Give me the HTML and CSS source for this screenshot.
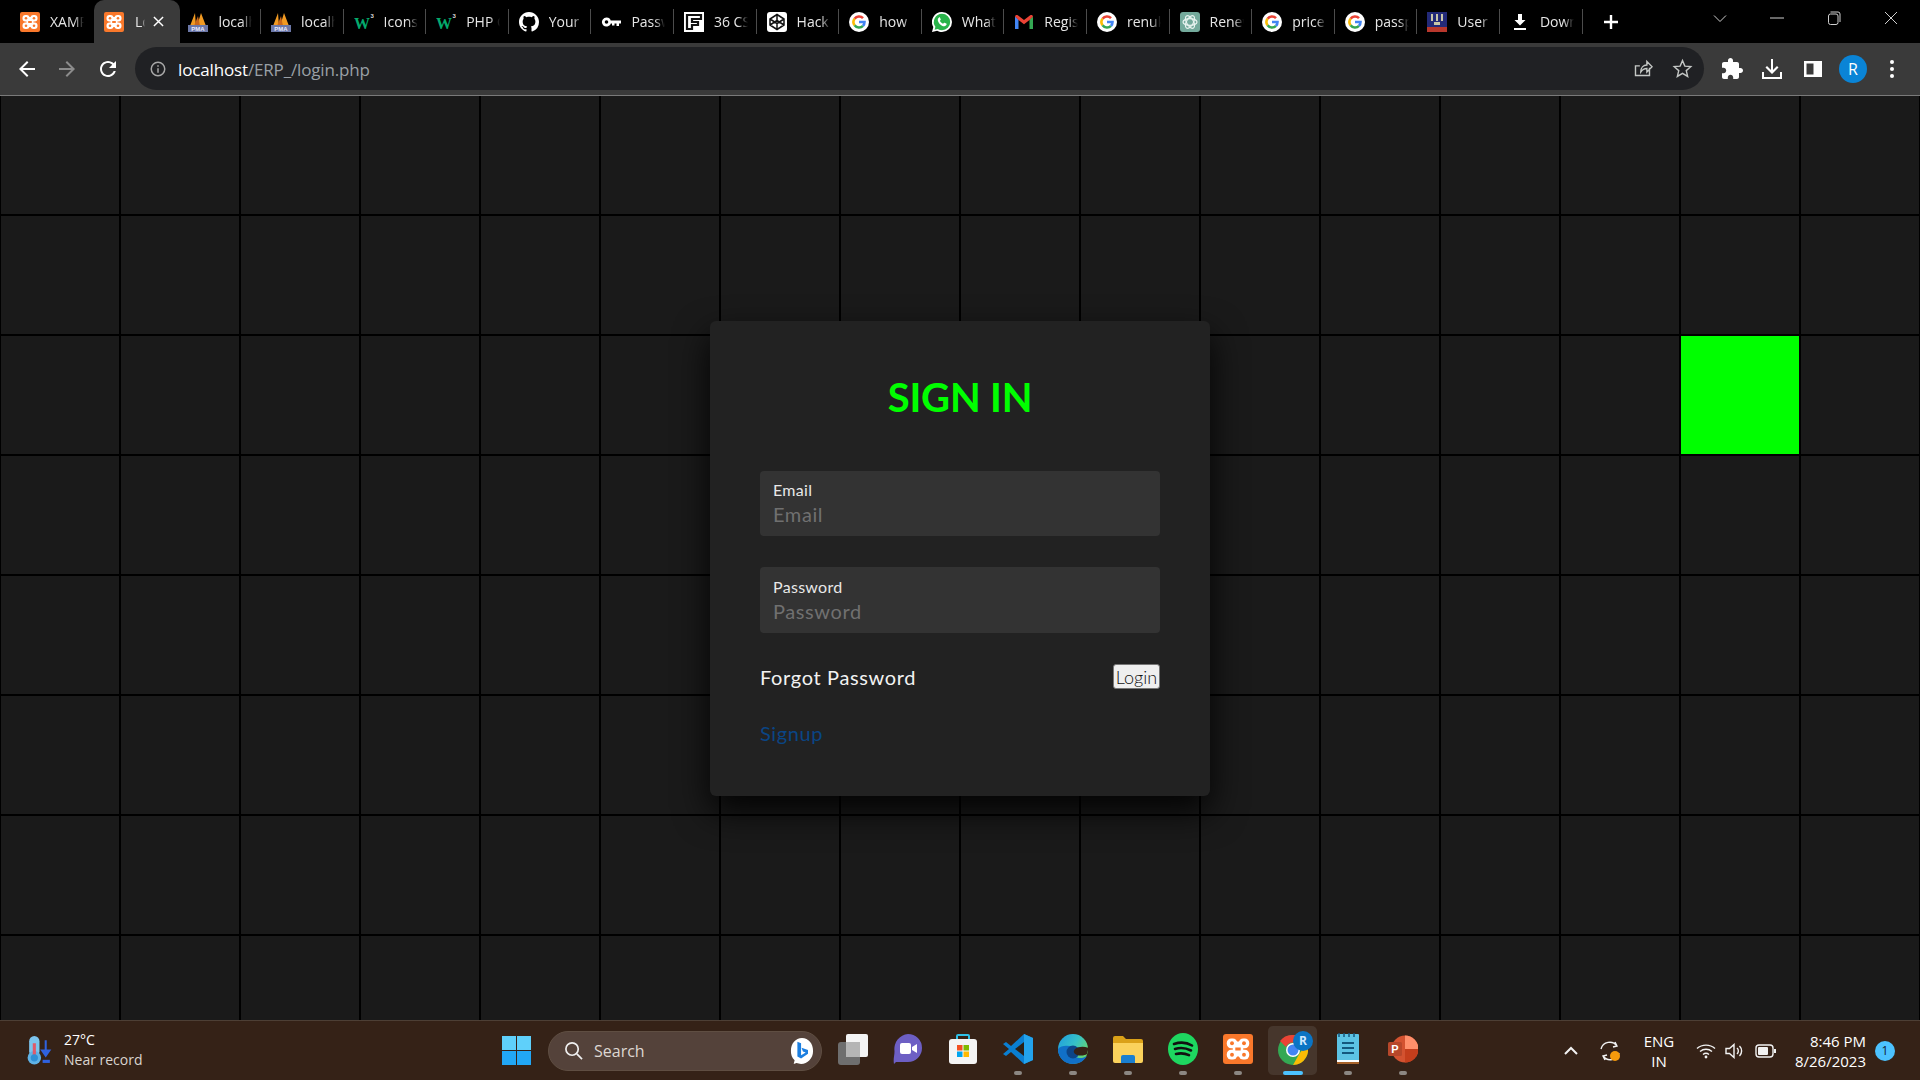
FILE: index.html
```html
<!DOCTYPE html>
<html>
<head>
<title>Login</title>
<link rel="stylesheet" href="styles.css">
</head>
<body>
<!-- favicons that show up more than once -->
<svg class="defs" width="0" height="0">
  <symbol id="xampp" viewBox="0 0 20 20">
    <rect width="20" height="20" rx="2" fill="#f9782b"/>
    <g fill="#fff">
      <rect x="2.500" y="3" width="7" height="6.500" rx="3"/>
      <rect x="10.500" y="3" width="7" height="6.500" rx="3"/>
      <rect x="2.500" y="10.500" width="7" height="6.500" rx="3"/>
      <rect x="10.500" y="10.500" width="7" height="6.500" rx="3"/>
      <rect x="6.500" y="5" width="7" height="10"/>
    </g>
    <g fill="#f9782b">
      <circle cx="6" cy="6.200" r="1.300"/>
      <circle cx="14" cy="6.200" r="1.300"/>
      <circle cx="6" cy="13.800" r="1.300"/>
      <circle cx="14" cy="13.800" r="1.300"/>
      <rect x="8.200" y="9" width="3.600" height="2"/>
    </g>
  </symbol>
  <symbol id="google" viewBox="0 0 20 20">
    <circle cx="10" cy="10" r="10" fill="#fff"/>
    <g fill="none" stroke-width="2.600">
      <path d="M5.600 6.700A5.500 5.500 0 0 1 14 6.200" stroke="#ea4335"/>
      <path d="M5.600 13.300A5.500 5.500 0 0 1 5.600 6.700" stroke="#fbbc05"/>
      <path d="M14 13.800A5.500 5.500 0 0 1 5.600 13.300" stroke="#34a853"/>
      <path d="M14 13.800A5.500 5.500 0 0 0 15.500 10H10" stroke="#4285f4"/>
    </g>
  </symbol>
  <symbol id="sails" viewBox="0 0 20 14">
    <path d="M2 14 7 1l1 13zM9 14 13 1l5 13z" fill="#f19a22"/>
    <path d="M6 14 10 4l2 10z" fill="#c9661a"/>
  </symbol>
</svg>

<header class="tabstrip">
  <div class="tab tab-first"><svg class="favicon"><use href="#xampp"/></svg><span class="tab-title">XAMPP</span></div>
  <div class="tab tab-active"><svg class="favicon"><use href="#xampp"/></svg><span class="tab-title">Login</span>
    <svg class="tab-close" viewBox="0 0 12 12"><path d="M1 1l10 10M11 1 1 11"/></svg></div>
  <div class="tab"><svg class="favicon" viewBox="0 0 20 20"><use href="#sails" width="20" height="14"/><rect y="13" width="20" height="7" fill="#6c78a8"/><text x="10" y="19" class="pma-text">PMA</text></svg><span class="tab-title">localhost</span></div>
  <div class="tab"><svg class="favicon" viewBox="0 0 20 20"><use href="#sails" width="20" height="14"/><rect y="13" width="20" height="7" fill="#6c78a8"/><text x="10" y="19" class="pma-text">PMA</text></svg><span class="tab-title">localhost</span></div>
  <div class="tab"><svg class="favicon" viewBox="0 0 20 20"><text x="0" y="17" class="w3-w">W</text><text x="16.500" y="6" class="w3-3">3</text></svg><span class="tab-title">Icons</span></div>
  <div class="tab"><svg class="favicon" viewBox="0 0 20 20"><text x="0" y="17" class="w3-w">W</text><text x="16.500" y="6" class="w3-3">3</text></svg><span class="tab-title">PHP Conn</span></div>
  <div class="tab"><svg class="favicon" viewBox="0 0 16 16"><path fill="#fff" d="M8 0C3.58 0 0 3.58 0 8c0 3.54 2.29 6.53 5.47 7.59.4.07.55-.17.55-.38 0-.19-.01-.82-.01-1.49-2.01.37-2.53-.49-2.69-.94-.09-.23-.48-.94-.82-1.13-.28-.15-.68-.52-.01-.53.63-.01 1.08.58 1.23.82.72 1.21 1.87.87 2.33.66.07-.52.28-.87.51-1.07-1.78-.2-3.64-.89-3.64-3.95 0-.87.31-1.59.82-2.15-.08-.2-.36-1.02.08-2.12 0 0 .67-.21 2.2.82.64-.18 1.32-.27 2-.27.68 0 1.36.09 2 .27 1.53-1.04 2.2-.82 2.2-.82.44 1.1.16 1.92.08 2.12.51.56.82 1.27.82 2.15 0 3.07-1.87 3.75-3.65 3.95.29.25.54.73.54 1.48 0 1.07-.01 1.93-.01 2.2 0 .21.15.46.55.38A8.013 8.013 0 0016 8c0-4.42-3.58-8-8-8z"/></svg><span class="tab-title">Your</span></div>
  <div class="tab"><svg class="favicon" viewBox="0 0 20 20"><path fill="#fff" d="M5.500 5.500a4.500 4.500 0 1 1-4.300 6 4.500 4.500 0 0 1 4.300-6zm0 2.700a1.800 1.800 0 1 0 0 3.600 1.800 1.800 0 0 0 0-3.600zM9.500 8.500H20v3h-2v2.500h-2.500v-2.500h-2v2h-2.500v-2h-1.500z"/></svg><span class="tab-title">Password</span></div>
  <div class="tab"><svg class="favicon" viewBox="0 0 20 20"><rect width="20" height="20" fill="#fff"/><path d="M3 3h14v4H8v3h6v3H8v4H3z" fill="none" stroke="#111" stroke-width="2.200"/></svg><span class="tab-title">36 CSS</span></div>
  <div class="tab"><svg class="favicon" viewBox="0 0 20 20"><rect width="20" height="20" rx="3" fill="#fff"/><path d="M10 2.500 17 7v6l-7 4.500L3 13V7zM3 7l7 4.500L17 7M3 13l7-4.500 7 4.500M10 2.500v6M10 11.500v6" fill="none" stroke="#111" stroke-width="1.500"/></svg><span class="tab-title">Hack</span></div>
  <div class="tab"><svg class="favicon"><use href="#google"/></svg><span class="tab-title">how</span></div>
  <div class="tab"><svg class="favicon" viewBox="0 0 20 20"><path d="M10 0a10 10 0 0 1 0 20c-1.800 0-3.400-.5-4.900-1.300L0 20l1.300-5A10 10 0 0 1 10 0z" fill="#fff"/><path d="M10 1.800a8.200 8.200 0 0 1 0 16.400c-1.500 0-3-.4-4.300-1.200l-3.100.8.800-3A8.200 8.200 0 0 1 10 1.800z" fill="#29b34a"/><path d="M7.300 5.500c-.6.100-1.500 1-1.500 2.400 0 2.600 3.600 6.300 6.400 6.300 1.400 0 2.300-1 2.400-1.700.1-.6-.1-.8-.3-.9l-1.800-.9c-.3-.1-.5 0-.7.300l-.7.800c-1.300-.4-2.700-1.700-3.200-3l.7-.8c.2-.2.200-.4.100-.7l-.8-1.900c-.1-.2-.3-.3-.6-.3z" fill="#fff"/></svg><span class="tab-title">What</span></div>
  <div class="tab"><svg class="favicon" viewBox="0 0 20 20"><path d="M1 4.500V17h3.500V7.500z" fill="#4285f4"/><path d="M19 4.500V17h-3.500V7.500z" fill="#34a853"/><path d="M1 4.500c0-1.500 1.800-2 2.800-1.200L10 8l6.200-4.700c1-.8 2.800-.3 2.800 1.200L15.500 8 10 12.200 4.500 8z" fill="#ea4335"/></svg><span class="tab-title">Register</span></div>
  <div class="tab"><svg class="favicon"><use href="#google"/></svg><span class="tab-title">renuka</span></div>
  <div class="tab"><svg class="favicon" viewBox="0 0 20 20"><rect width="20" height="20" rx="3" fill="#74aa9c"/><g fill="none" stroke="#e8f3f0" stroke-width="1.200"><ellipse cx="10" cy="10" rx="7" ry="3.400"/><ellipse cx="10" cy="10" rx="7" ry="3.400" transform="rotate(60 10 10)"/><ellipse cx="10" cy="10" rx="7" ry="3.400" transform="rotate(120 10 10)"/></g></svg><span class="tab-title">Renew</span></div>
  <div class="tab"><svg class="favicon"><use href="#google"/></svg><span class="tab-title">price of</span></div>
  <div class="tab"><svg class="favicon"><use href="#google"/></svg><span class="tab-title">passport</span></div>
  <div class="tab"><svg class="favicon" viewBox="0 0 20 20"><rect width="20" height="20" fill="#232a78"/><rect y="15" width="20" height="5" fill="#b8372c"/><path d="M4 2h2v7H4zM9 2h2v7H9zM14 2h2v7h-2zM7 10h6v3H7z" fill="#c9c6a8"/></svg><span class="tab-title">User</span></div>
  <div class="tab"><svg class="favicon" viewBox="0 0 20 20"><path fill="#fff" d="M8 2h4v6h3.500L10 13.500 4.500 8H8zM4 16h12v2H4z"/></svg><span class="tab-title">Downloads</span></div>
  <svg class="newtab" viewBox="0 0 16 16"><path d="M8 1v14M1 8h14"/></svg>
  <div class="window-btns">
    <svg class="win-icon" viewBox="0 0 14 14"><path d="M1 4.500 7 10.500 13 4.500"/></svg>
    <svg class="win-icon" viewBox="0 0 14 14"><path d="M0 7H14"/></svg>
    <svg class="win-icon" viewBox="0 0 14 14"><rect x="1.500" y="3" width="9.500" height="10.500" rx="2"/><path d="M3.500 1H11a2 2 0 0 1 2 2v8"/></svg>
    <svg class="win-icon" viewBox="0 0 14 14"><path d="M1 1 13 13M13 1 1 13"/></svg>
  </div>
</header>

<nav class="toolbar">
  <svg class="tool-icon nav-back" viewBox="0 0 24 24"><path d="M20 11H7.830l5.590-5.590L12 4l-8 8 8 8 1.410-1.410L7.830 13H20v-2z"/></svg>
  <svg class="tool-icon nav-fwd" viewBox="0 0 24 24"><path d="M4 11h12.170l-5.590-5.590L12 4l8 8-8 8-1.410-1.410L16.170 13H4v-2z"/></svg>
  <svg class="tool-icon nav-reload" viewBox="0 0 24 24"><path d="M17.650 6.350C16.200 4.900 14.210 4 12 4c-4.420 0-7.990 3.580-7.990 8s3.570 8 7.990 8c3.730 0 6.840-2.550 7.730-6h-2.080c-.82 2.330-3.040 4-5.650 4-3.310 0-6-2.690-6-6s2.690-6 6-6c1.660 0 3.140.690 4.220 1.780L13 11h7V4l-2.350 2.350z"/></svg>
  <div class="omnibox">
    <svg class="info-icon" viewBox="0 0 24 24"><path d="M12 2a10 10 0 1 0 0 20 10 10 0 0 0 0-20zm0 18a8 8 0 1 1 0-16 8 8 0 0 1 0 16zM11 7h2v2h-2zm0 4h2v6h-2z"/></svg>
    <span class="url"><span class="url-host">localhost</span>/ERP_/login.php</span>
    <svg class="omni-icon" viewBox="0 0 24 24"><path d="M20 11v9H4V9h5M10 16c0-5 3-8 7-8V4l6 6-6 6v-4c-3 0-5 1-7 4z"/></svg>
    <svg class="omni-icon omni-star" viewBox="0 0 24 24"><path d="M12 3l2.700 6.300 6.800.6-5.200 4.500 1.600 6.700L12 17.500l-5.900 3.600 1.600-6.700-5.200-4.500 6.800-.6z"/></svg>
  </div>
  <svg class="tool-icon tool-puzzle" viewBox="0 0 24 24"><path d="M20.500 11H19V7c0-1.100-.9-2-2-2h-4V3.500C13 2.120 11.880 1 10.500 1S8 2.120 8 3.500V5H4c-1.100 0-1.990.9-1.990 2v3.800H3.500c1.490 0 2.700 1.210 2.700 2.700s-1.210 2.700-2.700 2.700H2V20c0 1.100.9 2 2 2h3.800v-1.500c0-1.490 1.210-2.700 2.700-2.700 1.490 0 2.700 1.210 2.700 2.700V22H17c1.100 0 2-.9 2-2v-4h1.500c1.380 0 2.500-1.120 2.500-2.500S21.880 11 20.500 11z"/></svg>
  <svg class="tool-icon tool-download" viewBox="0 0 24 24"><path d="M11 2h2v11l4-4 1.500 1.500L12 17l-6.500-6.500L7 9l4 4zM2 15h2v5h16v-5h2v7H2z"/></svg>
  <svg class="tool-icon tool-panel" viewBox="0 0 24 24"><path fill-rule="evenodd" d="M3 4h18v16H3zM5.500 6.500v11h7v-11z"/></svg>
  <span class="avatar">R</span>
  <svg class="tool-icon tool-menu" viewBox="0 0 24 24"><circle cx="12" cy="5" r="2"/><circle cx="12" cy="12" r="2"/><circle cx="12" cy="19" r="2"/></svg>
</nav>

<main class="page">
  <section class="grid" id="grid"></section>

  <form class="card">
    <h2 class="card-title">SIGN IN</h2>
    <div class="field">
      <label class="field-label" for="email">Email</label>
      <input class="field-input" id="email" type="text" placeholder="Email">
    </div>
    <div class="field field-pass">
      <label class="field-label" for="pass">Password</label>
      <input class="field-input" id="pass" type="password" placeholder="Password">
    </div>
    <div class="actions">
      <a class="forgot">Forgot Password</a>
      <button class="login-btn" type="button">Login</button>
    </div>
    <a class="signup">Signup</a>
  </form>
</main>

<footer class="taskbar">
  <div class="weather">
    <svg class="weather-icon" viewBox="0 0 24 28"><rect x="2" y="0" width="10" height="20" rx="5" fill="#7cc4ee"/><circle cx="7" cy="21" r="6.500" fill="#5fb2e6"/><rect x="5.500" y="7" width="3" height="12" fill="#e0596a"/><circle cx="7" cy="21" r="3.500" fill="#2f8fd6"/><path d="M18 4v14M14.500 14l3.500 5 3.500-5z" stroke="#2f62e0" stroke-width="2" fill="#2f62e0"/><rect x="15" y="23" width="7" height="3" fill="#2f62e0"/></svg>
    <div class="weather-text"><span class="weather-temp">27°C</span><span class="weather-note">Near record</span></div>
  </div>

  <svg class="start" viewBox="0 0 29 29"><path fill="#5fd0fa" d="M0 0h14v14H0zM15 0h14v14H15z"/><path fill="#22a7f5" d="M0 15h14v14H0zM15 15h14v14H15z"/></svg>

  <div class="searchbox">
    <svg class="search-icon" viewBox="0 0 20 20"><circle cx="8.500" cy="8.500" r="6.500"/><path d="M13.500 13.500 19 19"/></svg>
    <span class="search-text">Search</span>
    <svg class="bing" viewBox="0 0 26 30"><path d="M13 1c7 0 12 6 12 14s-6 14-13 14l-5-1-3 1 1-4c-3-3-4-6-4-10C1 7 6 1 13 1z" fill="#fff"/><path d="M8 5l4 1.500v13l5-3-3-1-1.500-4 7 2.500v4l-7.500 5L8 21z" fill="#1c7fe0"/></svg>
  </div>

  <div class="apps">
    <div class="app"><svg class="app-icon" viewBox="0 0 30 32"><rect x="0" y="9" width="22" height="23" rx="3" fill="#6e6e6e"/><rect x="8" y="1" width="22" height="23" rx="2" fill="#f4f4f4"/><rect x="8" y="9" width="14" height="15" fill="#b5b5b5"/></svg></div>
    <div class="app"><svg class="app-icon" viewBox="0 0 30 32"><path d="M15 1a14 14 0 0 1 0 28H3L1 31c-1-5 .5-8 .5-13A15 15 0 0 1 15 1z" fill="#6d5fc4"/><rect x="7" y="10" width="11" height="11" rx="2" fill="#fff"/><path d="M19 14l5-3v9l-5-3z" fill="#fff"/></svg></div>
    <div class="app"><svg class="app-icon" viewBox="0 0 30 32"><path d="M9 8V3a1 1 0 0 1 1-1h10a1 1 0 0 1 1 1v5" fill="none" stroke="#2fc1e8" stroke-width="2"/><rect x="1" y="6" width="28" height="25" rx="3" fill="#f4f4f4"/><path fill="#f25022" d="M9 12h5.500v5.500H9z"/><path fill="#7fba00" d="M15.500 12H21v5.500h-5.500z"/><path fill="#00a4ef" d="M9 18.500h5.500V24H9z"/><path fill="#ffb900" d="M15.500 18.500H21V24h-5.500z"/></svg></div>
    <div class="app app-open"><svg class="app-icon" viewBox="0 0 30 32"><path d="M21 1 30 5v22l-9 4L8 19l-5 4-3-2 6-5-6-5 3-2 5 4z" fill="#0a7fd2"/><path d="M21 9v14l-9-7z" fill="#2b2016"/><path d="M21 1 30 5v22l-9 4z" fill="#23a3ec"/></svg></div>
    <div class="app app-open"><svg class="app-icon" viewBox="0 0 30 32">
      <defs><linearGradient id="edgeTop" x1="0" y1="0" x2="1" y2=".6"><stop offset="0" stop-color="#1f9be0"/><stop offset=".55" stop-color="#35c1c8"/><stop offset="1" stop-color="#6ad66a"/></linearGradient></defs>
      <circle cx="15" cy="16" r="15" fill="url(#edgeTop)"/>
      <path d="M0 16c0 9 7 15 15 15 6 0 11-3 14-8-3 2-8 3-11 1-4-2-5-7-2-10C10 12 3 12 0 16z" fill="#1170c8"/>
      <circle cx="15" cy="19" r="6.500" fill="#0d4588"/>
      <path d="M30.500 15C26 13 20 13.500 17 16c-2 2-1.500 5 2 6 4 1 8 .5 10-1z" fill="#352217"/>
    </svg></div>
    <div class="app app-open"><svg class="app-icon" viewBox="0 0 30 32"><path d="M0 5a2 2 0 0 1 2-2h8l3 3h15a2 2 0 0 1 2 2v4H0z" fill="#dba118"/><path d="M0 10h30v18a2 2 0 0 1-2 2H2a2 2 0 0 1-2-2z" fill="#fbd25c"/><path d="M8 24a2 2 0 0 1 2-2h10a2 2 0 0 1 2 2v6H8z" fill="#1a7fd0"/></svg></div>
    <div class="app app-open"><svg class="app-icon" viewBox="0 0 30 32"><ellipse cx="15" cy="16" rx="15" ry="16" fill="#1ed760"/><path d="M6 11c6-2 13-1.500 18 1.500M7 16c5-1.500 11-1 16 1.500M8 21c4-1 9-.7 13 1.200" fill="none" stroke="#111" stroke-width="2.600" stroke-linecap="round"/></svg></div>
    <div class="app app-open"><svg class="app-icon" viewBox="0 0 20 20"><use href="#xampp"/></svg></div>
    <div class="app app-active"><svg class="app-icon app-chrome" viewBox="0 0 30 32"><circle cx="15" cy="17" r="15" fill="#34a853"/><path d="M15 2a15 15 0 0 1 13 7.500H15a7.500 7.500 0 0 0-7 4.500L2 8a15 15 0 0 1 13-6z" fill="#ea4335"/><path d="M28 9.500A15 15 0 0 1 15 32l6.500-11.500A7.500 7.500 0 0 0 22 9.500z" fill="#fbbc05"/><circle cx="15" cy="17" r="7" fill="#fff"/><circle cx="15" cy="17" r="5.500" fill="#4285f4"/></svg><span class="app-badge">R</span></div>
    <div class="app app-open"><svg class="app-icon" viewBox="0 0 30 32"><rect x="4" y="1" width="22" height="30" rx="1" fill="#5cc3e4"/><rect x="4" y="27" width="22" height="2" fill="#fff"/><rect x="4" y="29" width="22" height="2" fill="#a8632a"/><path d="M9 10h12M9 15h12M9 20h12" stroke="#14587e" stroke-width="2"/><path d="M6 0v4M11 0v4M16 0v4M21 0v4" stroke="#14587e" stroke-width="1.500"/></svg></div>
    <div class="app app-open"><svg class="app-icon" viewBox="0 0 30 32"><circle cx="17" cy="16" r="13.500" fill="#d35230"/><path d="M17 2.500a13.500 13.500 0 0 1 13.500 13.500H17z" fill="#ff8f6b"/><path d="M17 16h13.500A13.500 13.500 0 0 1 17 29.500z" fill="#c43e1c"/><rect x="0" y="9" width="14" height="14" rx="1.500" fill="#b7472a"/><text x="7" y="20" class="ppt-p">P</text></svg></div>
  </div>

  <div class="tray">
    <svg class="tray-icon tray-chevron" viewBox="0 0 16 16"><path d="M2 11 8 5l6 6"/></svg>
    <svg class="tray-icon tray-sync" viewBox="0 0 22 22"><path d="M2 9a9 9 0 0 1 16-3M16 2l2 4-4 1M20 13a9 9 0 0 1-16 3M6 20l-2-4 4-1"/><circle cx="16" cy="16" r="5" class="sync-dot"/></svg>
    <div class="lang"><span>ENG</span><span>IN</span></div>
    <svg class="tray-icon tray-wifi" viewBox="0 0 20 16"><path d="M1 5.500c5-4.500 13-4.500 18 0M4 8.500c3.500-3 8.500-3 12 0M7 11.500c1.800-1.500 4.200-1.500 6 0"/><circle cx="10" cy="14" r="1.400" class="tray-solid"/></svg>
    <svg class="tray-icon tray-sound" viewBox="0 0 20 16"><path d="M1 5.500h3.500L9 1.500v13l-4.500-4H1zM12 5a4 4 0 0 1 0 6M14.500 3a7 7 0 0 1 0 10"/></svg>
    <svg class="tray-icon tray-battery" viewBox="0 0 22 14"><rect x="1" y="1" width="17" height="12" rx="3"/><rect x="3" y="3" width="10" height="8" rx="1" class="tray-solid"/><rect x="19" y="5" width="2" height="4" class="tray-solid"/></svg>
    <div class="clock"><span>8:46 PM</span><span>8/26/2023</span></div>
    <span class="notif">1</span>
  </div>
</footer>

<script>
  // 16 x 8 background squares, one of them is lit
  var grid = document.getElementById("grid");
  for (var i = 0; i < 128; i++) {
    var cell = document.createElement("span");
    cell.className = i === 46 ? "cell cell-lit" : "cell";
    grid.appendChild(cell);
  }
</script>
</body>
</html>
```

FILE: styles.css
```css
/* page frame */
* { box-sizing: border-box; }
html, body { margin: 0; height: 100%; }
body {
  width: 1920px; height: 1080px; overflow: hidden;
  display: flex; flex-direction: column;
  background: #000; color: #fff;
  font-family: "Open Sans", "Liberation Sans", sans-serif;
}
.defs { position: absolute; }

/* tab strip */
.tabstrip {
  height: 43px; flex: none;
  display: flex; align-items: center;
  padding-left: 10px;
  background: #000;
}
.tab {
  width: 82.6px; height: 43px; flex: none;
  display: flex; align-items: center; gap: 10px;
  padding-left: 10px;
  position: relative;
}
.tab::after {
  content: ""; position: absolute; right: 0; top: 9px;
  width: 1px; height: 25px; background: #4c4c4c;
}
.tab-first { width: 85px; }
.tab-first::after, .tab-active::after { display: none; }
.favicon { width: 20px; height: 20px; flex: none; }
.tab-title {
  width: 34px; overflow: hidden; white-space: nowrap;
  font-size: 14px; line-height: 20px; color: #e6e6e6;
  -webkit-mask-image: linear-gradient(to right, #000 70%, transparent);
  mask-image: linear-gradient(to right, #000 70%, transparent);
}
.tab-active {
  width: 86px; margin-right: -1.6px; margin-left: -1px;
  padding-left: 10px; gap: 11px;
  background: #3a3a3a; border-radius: 10px 10px 0 0;
}
.tab-active .tab-title { width: 10px; }
.tab-close { width: 11px; height: 11px; stroke: #fff; stroke-width: 1.6; fill: none; margin-left: -3px; }
.newtab { width: 16px; height: 16px; margin-left: 20px; stroke: #fff; stroke-width: 2.4; fill: none; flex: none; }
.window-btns {
  margin-left: 94px; margin-top: -7px;
  display: flex; align-items: center; gap: 43px;
}
.win-icon { width: 14px; height: 14px; stroke: #cfcfcf; stroke-width: 1; fill: none; }

/* address bar row */
.toolbar {
  height: 52px; flex: none;
  display: flex; align-items: center;
  padding-left: 15px;
  background: #3a3a3a;
}
.tool-icon { width: 24px; height: 24px; fill: #fff; flex: none; }
.nav-fwd { fill: #8c8c8c; margin-left: 16px; }
.nav-reload { margin-left: 17px; }
.omnibox {
  width: 1569px; height: 43px; margin-left: 15px; margin-top: -1px; flex: none;
  display: flex; align-items: center;
  padding-left: 14px;
  border-radius: 22px;
  background: #202124;
}
.info-icon { width: 18px; height: 18px; fill: #a8a8a8; flex: none; }
.url { margin: 2px 0 0 11px; font-size: 17px; color: #9aa0a6; flex: 1; letter-spacing: -.15px; }
.url-host { color: #fff; }
.omni-icon { width: 21px; height: 21px; fill: none; stroke: #c4c7c5; stroke-width: 1.6; margin-left: 19px; flex: none; }
.omni-star { margin-right: 11px; }
.tool-puzzle { margin-left: 16px; }
.tool-download { margin-left: 16px; }
.tool-panel { margin-left: 17px; }
.avatar {
  width: 28px; height: 28px; border-radius: 50%; margin-left: 14px; flex: none;
  background: #0a84d6; color: #fff;
  font-size: 16px; line-height: 28px; text-align: center;
}
.tool-menu { margin-left: 13px; }

/* background squares + form */
.page {
  position: relative; flex: none;
  height: 925px;
  border-top: 1px solid #7a7a7a;
  overflow: hidden;
  background: #000;
}
.grid {
  display: grid;
  grid-template-columns: repeat(16, 118px);
  grid-auto-rows: 118px;
  gap: 2px;
  padding-left: 1px;
}
.cell { background: #1a1a1a; }
.cell-lit { background: #0f0; }

.card {
  position: absolute; top: 225px; left: 710px;
  width: 500px; height: 475px;
  padding: 51px 50px 0;
  border-radius: 6px;
  background: #222;
  box-shadow: 0 15px 35px rgba(0, 0, 0, .9);
  font-family: Lato, "Liberation Sans", sans-serif;
}
.card-title {
  margin: 0 0 49px;
  font-size: 40px; line-height: 50px; font-weight: 700;
  letter-spacing: -.2px;
  text-align: center; color: #0f0;
}
.field {
  height: 65px;
  display: flex; flex-direction: column;
  padding: 9px 13px 0;
  border-radius: 4px;
  background: #333;
  margin-bottom: 31px;
}
.field-pass { height: 66px; padding-top: 10px; }
.field-label { font-size: 16px; line-height: 20px; color: #e8e8e8; letter-spacing: .3px; }
.field-input {
  margin-top: 2px; padding: 0; border: 0; outline: 0;
  background: transparent; color: #fff;
  font-family: inherit; font-size: 20px; line-height: 25px; letter-spacing: .6px;
}
.field-input::placeholder { color: #707070; opacity: 1; }
.actions { display: flex; align-items: center; justify-content: space-between; height: 25px; }
.forgot { font-size: 20px; color: #f2f2f2; letter-spacing: .65px; }
.login-btn {
  width: 47px; height: 25px; padding: 0;
  border: 1px solid #767676; border-radius: 3px;
  background: #efefef; color: #111;
  font-family: inherit; font-size: 18px; font-weight: 300;
}
.signup { display: block; margin-top: 31px; font-size: 20px; line-height: 26px; color: #0a4585; letter-spacing: .6px; }

/* windows taskbar */
.taskbar {
  height: 60px; flex: none;
  display: flex; align-items: center;
  border-top: 1px solid #4d3f35;
  background: #352217;
}
.weather { width: 502px; flex: none; display: flex; align-items: center; padding-left: 27px; gap: 12px; }
.weather-icon { width: 25px; height: 29px; flex: none; }
.weather-text { display: flex; flex-direction: column; font-size: 14px; line-height: 20px; padding-bottom: 2px; }
.weather-note { color: #d9d4cf; }
.start { width: 29px; height: 29px; flex: none; }
.searchbox {
  width: 274px; height: 40px; margin-left: 17px; flex: none;
  display: flex; align-items: center;
  padding-left: 15px;
  border: 1px solid #5f4e42; border-radius: 20px;
  background: #54423a;
}
.search-icon { width: 19px; height: 19px; fill: none; stroke: #efefef; stroke-width: 1.800; flex: none; }
.search-text { margin-left: 11px; font-size: 16px; color: #ddd7d2; flex: 1; }
.bing { width: 24px; height: 28px; margin-right: 7px; flex: none; }
.apps { display: flex; margin-left: 3px; flex: none; }
.app {
  width: 55px; height: 49px; flex: none;
  display: flex; align-items: center; justify-content: center;
  position: relative;
  padding-bottom: 3px;
}
.app-icon { width: 30px; height: 32px; }
.app-open::after, .app-active::after {
  content: ""; position: absolute; left: 50%; bottom: 0;
  width: 8px; height: 4px; margin-left: -4px;
  border-radius: 2px; background: #8c8782;
}
.app-active { background: #46362c; border-radius: 5px; width: 49px; margin: 0 3px; }
.app-active::after { width: 20px; margin-left: -10px; background: #4cc2ff; }
.app-badge {
  position: absolute; right: 4px; top: 5px;
  width: 20px; height: 20px; border-radius: 50%;
  background: #0a74c4; color: #cfe8ff;
  font-size: 12px; line-height: 20px; text-align: center; font-weight: 700;
}
.tray { display: flex; align-items: center; margin-left: 133px; flex: none; }
.tray-icon { fill: none; stroke: #f2f2f2; stroke-width: 1.400; flex: none; }
.tray-solid { fill: #f2f2f2; stroke: none; }
.tray-chevron { width: 16px; height: 16px; stroke-width: 2; }
.tray-sync { width: 22px; height: 22px; margin-left: 20px; }
.sync-dot { fill: #f59a0c; stroke: none; }
.lang {
  width: 40px; margin-left: 18px;
  display: flex; flex-direction: column; align-items: center;
  font-size: 15px; line-height: 20px;
}
.tray-wifi { width: 20px; height: 16px; margin-left: 17px; }
.tray-sound { width: 20px; height: 16px; margin-left: 9px; }
.tray-battery { width: 22px; height: 14px; margin-left: 10px; }
.clock {
  width: 89px;
  display: flex; flex-direction: column; align-items: flex-end;
  font-size: 15px; line-height: 20px;
}
.notif {
  width: 20px; height: 20px; margin-left: 9px; border-radius: 50%;
  background: #4cc2ff; color: #123;
  font-size: 12px; line-height: 20px; text-align: center;
}

/* small texts inside the svg icons */
.pma-text { font: 700 6px "Liberation Sans", sans-serif; text-anchor: middle; fill: #e8ecff; }
.w3-w { font: 700 16px "Liberation Serif", serif; fill: #04aa6d; }
.w3-3 { font: 700 6px "Liberation Sans", sans-serif; fill: #ddd; }
.ppt-p { font: 700 11px "Liberation Sans", sans-serif; text-anchor: middle; fill: #fff; }
```
